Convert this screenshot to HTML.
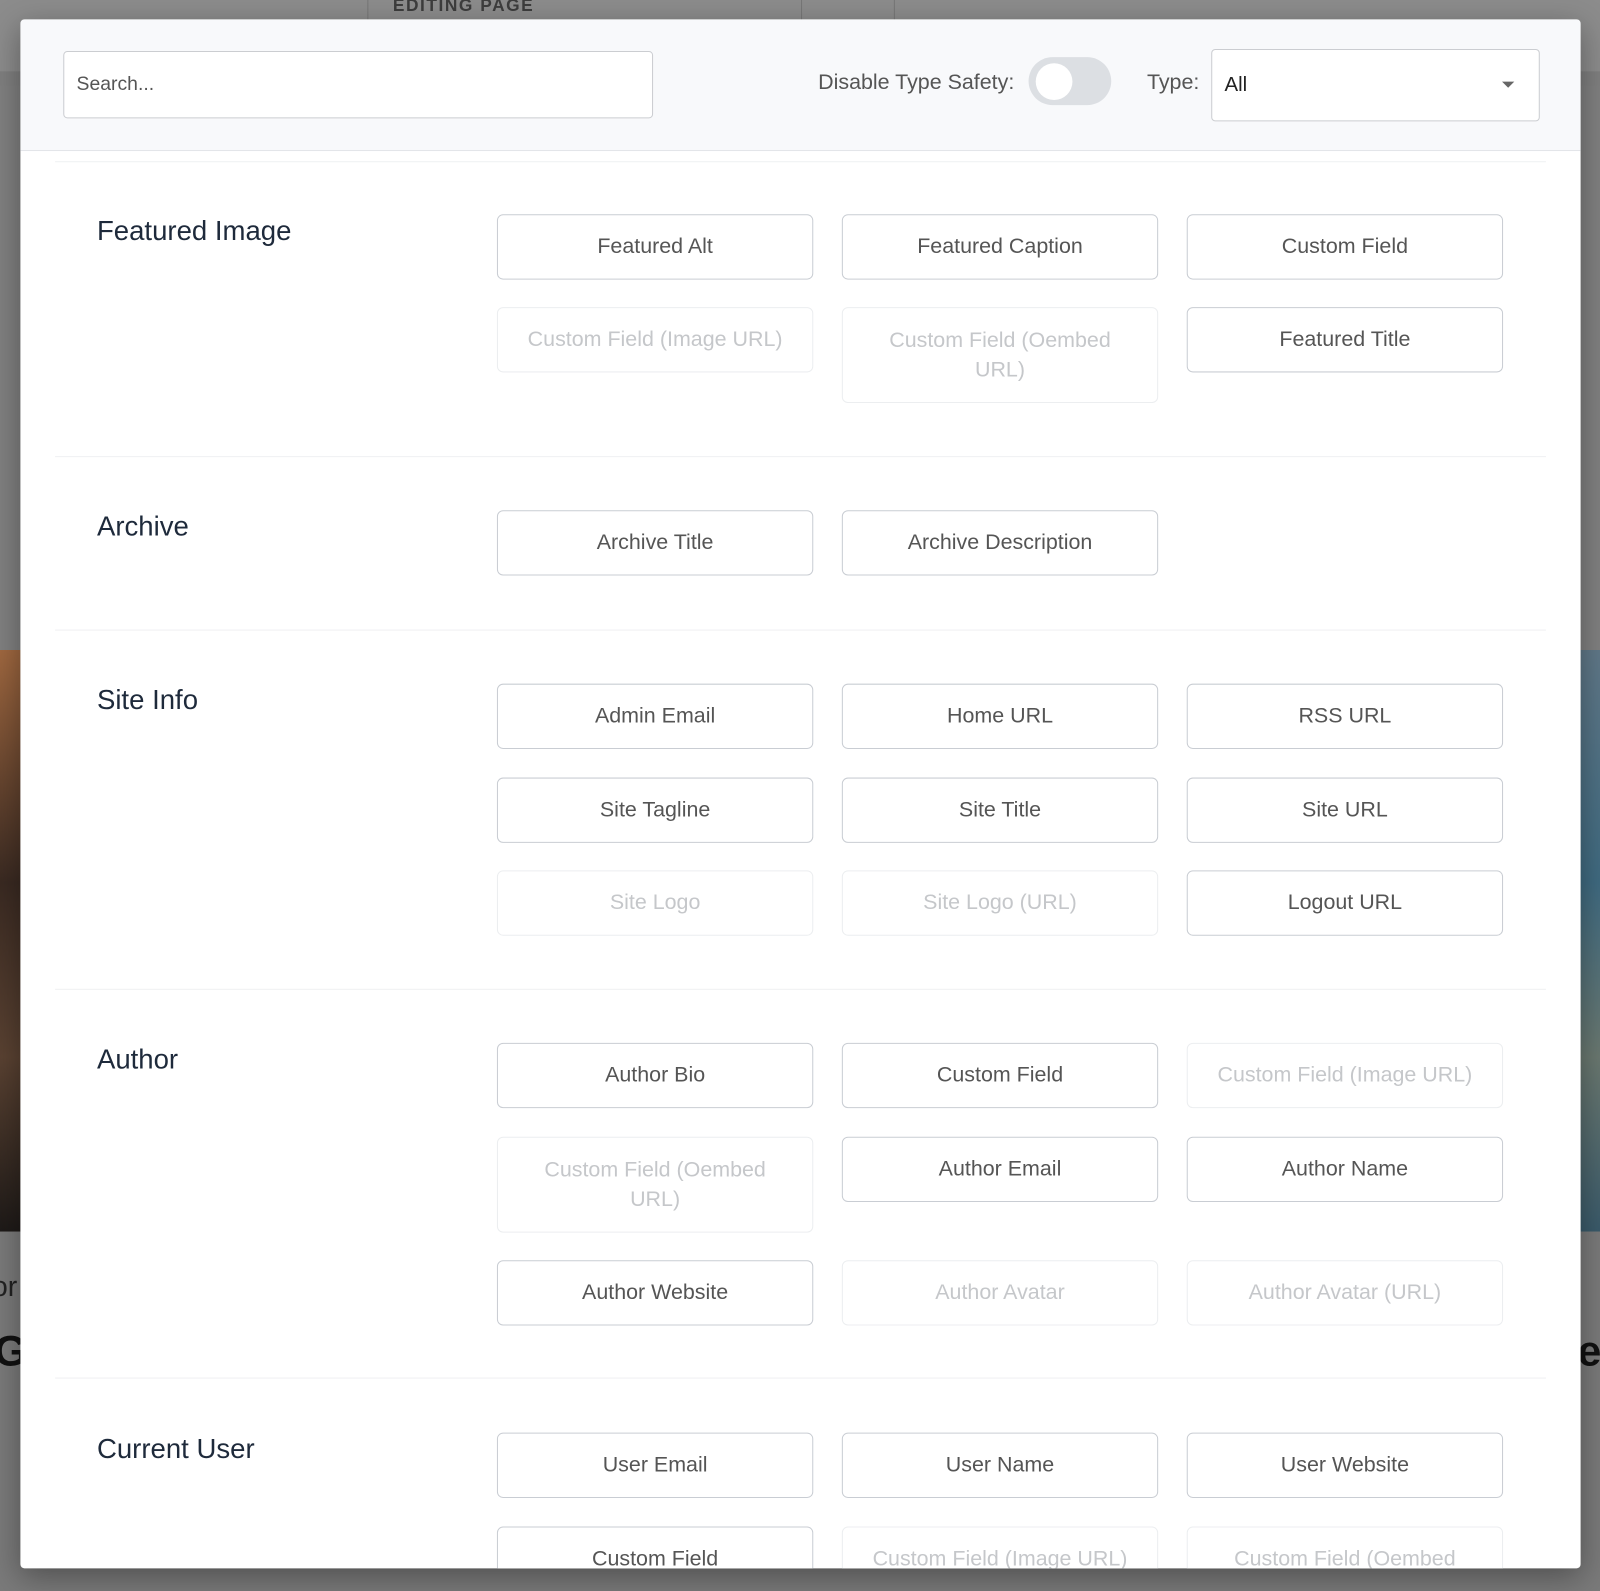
<!DOCTYPE html>
<html><head><meta charset="utf-8">
<style>
html,body{margin:0;padding:0;width:1600px;height:1591px;overflow:hidden;background:#808080;font-family:"Liberation Sans",sans-serif;}
#w{position:absolute;left:0;top:0;width:1568px;height:1559px;transform:scale(1.020408);transform-origin:0 0;}
.abs{position:absolute;}
.modal{left:20px;top:19px;width:1529px;height:1518px;background:#fff;border-radius:4px;overflow:hidden;box-shadow:0 8px 30px rgba(0,0,0,.35);}
.hdr{left:0;top:0;width:1529px;height:128px;background:#f8f9fb;border-bottom:1px solid #e3e5e9;}
.sep{height:1px;background:#eff0f2;left:34px;width:1461px;}
.t{left:75px;font-size:27px;color:#1e2a3b;}
.b{width:310px;height:64px;border:1px solid #c9cdd3;border-radius:6px;box-sizing:border-box;text-align:center;font-size:21px;color:#555;line-height:62px;background:#fff;}
.b.d{border-color:#eceef0;color:#c5c7ca;}
.b.two{height:94px;line-height:29px;padding-top:17px;}
</style></head><body>
<div id="w">
<div class="abs" style="left:0;top:0;width:1568px;height:70px;background:#8c8c8c"></div>
<div class="abs" style="left:0;top:70px;width:1568px;height:14px;background:#7f7f7f"></div>
<div class="abs" style="left:360px;top:0;width:1px;height:20px;background:#777"></div>
<div class="abs" style="left:785px;top:0;width:1px;height:20px;background:#777"></div>
<div class="abs" style="left:876px;top:0;width:1px;height:20px;background:#777"></div>
<div class="abs" style="left:385px;top:-4px;font-size:17px;letter-spacing:1.5px;color:#3d3d3d;font-weight:bold">EDITING PAGE</div>
<div class="abs" style="left:0;top:637px;width:20px;height:570px;background:linear-gradient(#a06840,#3a2a22 40%,#5a4232 70%,#1e1a18)"></div>
<div class="abs" style="left:1549px;top:637px;width:19px;height:570px;background:linear-gradient(#607888,#3f6a80 40%,#6a7870 70%,#3a5a6a)"></div>
<div class="abs" style="left:0;top:1207px;width:1568px;height:352px;background:#7a7a7a"></div>
<div class="abs" style="left:-8px;top:1245px;font-size:28px;color:#222">or</div>
<div class="abs" style="left:-6px;top:1300px;font-size:42px;color:#111;font-weight:bold">Gr</div>
<div class="abs" style="left:1546px;top:1300px;font-size:42px;color:#111;font-weight:bold">e</div>

<div class="abs modal">
 <div class="abs hdr">
  <div class="abs" style="left:42px;top:31px;width:578px;height:66px;background:#fff;border:1px solid #cbcdd1;border-radius:4px;box-sizing:border-box;font-size:19px;color:#555;line-height:64px;padding-left:12px">Search...</div>
  <div class="abs" style="left:760px;top:50px;width:214px;text-align:right;font-size:21px;color:#555">Disable Type Safety:</div>
  <div class="abs" style="left:988px;top:37px;width:81px;height:47px;background:#dcdfe3;border-radius:24px"></div>
  <div class="abs" style="left:995px;top:43px;width:36px;height:36px;background:#fff;border-radius:50%"></div>
  <div class="abs" style="left:1104px;top:50px;font-size:21px;color:#555">Type:</div>
  <div class="abs" style="left:1167px;top:29px;width:322px;height:71px;background:#fff;border:1px solid #cbcdd1;border-radius:4px;box-sizing:border-box;font-size:20px;color:#222;line-height:69px;padding-left:12px">All</div>
  <div class="abs" style="left:1452px;top:61px;width:0;height:0;border-left:6px solid transparent;border-right:6px solid transparent;border-top:6px solid #666"></div>
 </div>
 <div class="abs sep" style="top:139px"></div>
 <div class="abs sep" style="top:428px"></div>
 <div class="abs sep" style="top:598px"></div>
 <div class="abs sep" style="top:950px"></div>
 <div class="abs sep" style="top:1331px"></div>

 <div class="abs t" style="top:192px">Featured Image</div>
 <div class="abs b" style="left:467px;top:191px">Featured Alt</div>
 <div class="abs b" style="left:805px;top:191px">Featured Caption</div>
 <div class="abs b" style="left:1143px;top:191px">Custom Field</div>
 <div class="abs b d" style="left:467px;top:282px">Custom Field (Image URL)</div>
 <div class="abs b d two" style="left:805px;top:282px">Custom Field (Oembed<br>URL)</div>
 <div class="abs b" style="left:1143px;top:282px">Featured Title</div>

 <div class="abs t" style="top:482px">Archive</div>
 <div class="abs b" style="left:467px;top:481px">Archive Title</div>
 <div class="abs b" style="left:805px;top:481px">Archive Description</div>

 <div class="abs t" style="top:652px">Site Info</div>
 <div class="abs b" style="left:467px;top:651px">Admin Email</div>
 <div class="abs b" style="left:805px;top:651px">Home URL</div>
 <div class="abs b" style="left:1143px;top:651px">RSS URL</div>
 <div class="abs b" style="left:467px;top:743px">Site Tagline</div>
 <div class="abs b" style="left:805px;top:743px">Site Title</div>
 <div class="abs b" style="left:1143px;top:743px">Site URL</div>
 <div class="abs b d" style="left:467px;top:834px">Site Logo</div>
 <div class="abs b d" style="left:805px;top:834px">Site Logo (URL)</div>
 <div class="abs b" style="left:1143px;top:834px">Logout URL</div>

 <div class="abs t" style="top:1004px">Author</div>
 <div class="abs b" style="left:467px;top:1003px">Author Bio</div>
 <div class="abs b" style="left:805px;top:1003px">Custom Field</div>
 <div class="abs b d" style="left:1143px;top:1003px">Custom Field (Image URL)</div>
 <div class="abs b d two" style="left:467px;top:1095px">Custom Field (Oembed<br>URL)</div>
 <div class="abs b" style="left:805px;top:1095px">Author Email</div>
 <div class="abs b" style="left:1143px;top:1095px">Author Name</div>
 <div class="abs b" style="left:467px;top:1216px">Author Website</div>
 <div class="abs b d" style="left:805px;top:1216px">Author Avatar</div>
 <div class="abs b d" style="left:1143px;top:1216px">Author Avatar (URL)</div>

 <div class="abs t" style="top:1386px">Current User</div>
 <div class="abs b" style="left:467px;top:1385px">User Email</div>
 <div class="abs b" style="left:805px;top:1385px">User Name</div>
 <div class="abs b" style="left:1143px;top:1385px">User Website</div>
 <div class="abs b" style="left:467px;top:1477px">Custom Field</div>
 <div class="abs b d" style="left:805px;top:1477px">Custom Field (Image URL)</div>
 <div class="abs b d" style="left:1143px;top:1477px">Custom Field (Oembed</div>
</div>
</div>
</body></html>
